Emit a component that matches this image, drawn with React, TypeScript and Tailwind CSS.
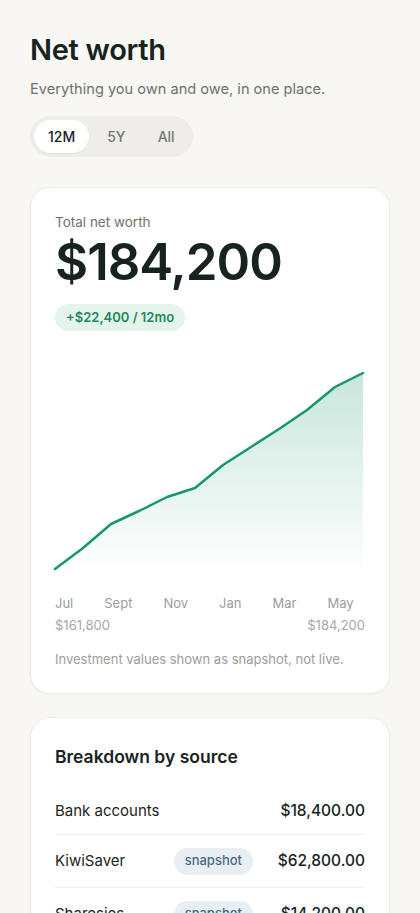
import { useState } from "react";

// 12 monthly points, Jul -> Jun (y inside a 308x220 box)
const POINTS = [213, 192, 168, 155, 141, 132, 109, 91, 73, 54, 31, 17];
const MONTHS = ["Jul", "Sept", "Nov", "Jan", "Mar", "May"];

const RANGES = ["12M", "5Y", "All"];

const SOURCES = [
  { name: "Bank accounts", amount: "$18,400.00", snapshot: false },
  { name: "KiwiSaver", amount: "$62,800.00", snapshot: true },
  { name: "Sharesies", amount: "$14,200.00", snapshot: true },
  { name: "Property", amount: "$410,000.00", snapshot: false },
  { name: "Mortgage", amount: "-$321,200.00", snapshot: false },
];

function Chart() {
  const w = 308;
  const h = 220;
  const step = w / (POINTS.length - 1);
  const line = POINTS.map((y, i) => `${i === 0 ? "M" : "L"}${(i * step).toFixed(1)} ${y}`).join(" ");
  const area = `${line} L${w} ${h} L0 ${h} Z`;

  return (
    <svg width={w} height={h} viewBox={`0 0 ${w} ${h}`} className="block overflow-visible">
      <defs>
        <linearGradient id="nw-fill" x1="0" y1="0" x2="0" y2="1">
          <stop offset="0%" stopColor="#17976a" stopOpacity="0.24" />
          <stop offset="100%" stopColor="#17976a" stopOpacity="0" />
        </linearGradient>
      </defs>
      <path d={area} fill="url(#nw-fill)" />
      <path d={line} fill="none" stroke="#17976a" strokeWidth="2.5" strokeLinejoin="round" strokeLinecap="round" />
    </svg>
  );
}

export default function App() {
  const [range, setRange] = useState("12M");

  return (
    <div className="min-h-screen bg-[#f8f7f4] px-[30px] pt-8 pb-10 font-['Inter','Liberation_Sans',sans-serif] text-[#17241e]">
      {/* Header */}
      <h1 className="text-[29px] leading-9 font-semibold tracking-[-0.01em]">Net worth</h1>
      <p className="mt-[10px] text-[14.6px] leading-[22px] text-[#6d716e]">
        Everything you own and owe, in one place.
      </p>

      {/* Range switch */}
      <div className="mt-4 inline-flex gap-1 rounded-full bg-[#efede9] p-1">
        {RANGES.map((r) => (
          <button
            key={r}
            onClick={() => setRange(r)}
            className={`h-[33px] rounded-full px-[14px] text-[14px] font-medium ${
              range === r ? "bg-white text-[#17241e] shadow-[0_1px_2px_rgba(0,0,0,0.06)]" : "text-[#747874]"
            }`}
          >
            {r}
          </button>
        ))}
      </div>

      {/* Total card */}
      <div className="mt-[30px] rounded-[20px] border border-[#eeece8] bg-white p-6 shadow-[0_1px_3px_rgba(0,0,0,0.03)]">
        <div className="text-[13.5px] leading-5 text-[#6d716e]">Total net worth</div>
        <div className="mt-1 text-[51px] leading-[52px] font-semibold tracking-[-0.02em]">$184,200</div>
        <div className="mt-4 inline-flex h-[27px] items-center rounded-full bg-[#e4f4eb] px-[11px] text-[13px] font-semibold text-[#1b8a5c]">
          +$22,400 / 12mo
        </div>

        <div className="mt-[25px]">
          <Chart />
        </div>

        <div className="mt-[18px] flex gap-[31px] text-[13px] leading-[18px] text-[#9a9e9b]">
          {MONTHS.map((m) => (
            <span key={m}>{m}</span>
          ))}
        </div>
        <div className="mt-1 flex justify-between text-[13px] leading-[18px] text-[#a5a9a6]">
          <span>$161,800</span>
          <span>$184,200</span>
        </div>

        <p className="mt-[15px] text-[13px] leading-5 text-[#9a9e9b]">
          Investment values shown as snapshot, not live.
        </p>
      </div>

      {/* Breakdown */}
      <div className="mt-[23px] rounded-[20px] border border-[#eeece8] bg-white px-6 pt-[26px] pb-3 shadow-[0_1px_3px_rgba(0,0,0,0.03)]">
        <h2 className="text-[17.5px] leading-[26px] font-semibold">Breakdown by source</h2>
        <div className="mt-[12px]">
          {SOURCES.map((s, i) => (
            <div
              key={s.name}
              className={`flex h-[53px] items-center border-[#efeeea] ${i === 0 ? "pt-[6px]" : ""} ${
                i < SOURCES.length - 1 ? "border-b" : ""
              }`}
            >
              <span className="flex-1 text-[15px] text-[#1c2420]">{s.name}</span>
              {s.snapshot && (
                <span className="inline-flex h-[27px] items-center rounded-full bg-[#e8eef2] px-[11px] text-[13px] font-medium text-[#4b6a84]">
                  snapshot
                </span>
              )}
              <span className="w-[112px] text-right text-[15.5px] font-medium">{s.amount}</span>
            </div>
          ))}
        </div>
      </div>
    </div>
  );
}
